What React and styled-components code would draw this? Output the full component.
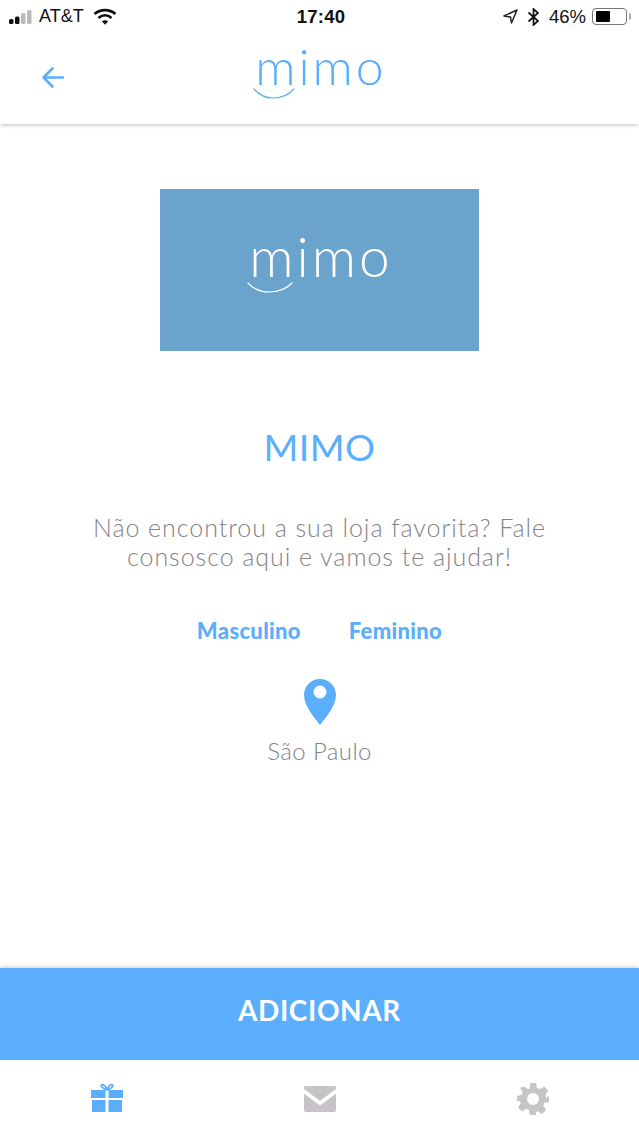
import React from 'react';
import styled, { createGlobalStyle } from 'styled-components';

const BLUE = '#5aaefc';
const GRAY = '#c6c4c6';

const GlobalStyle = createGlobalStyle`
  html, body {
    margin: 0;
    padding: 0;
    background: #fff;
  }
`;

const Page = styled.div`
  width: 639px;
  height: 1136px;
  display: flex;
  flex-direction: column;
  overflow: hidden;
  background: #fff;
  font-family: Lato, "Open Sans", sans-serif;
`;

const StatusBar = styled.div`
  height: 33px;
  padding: 0 5px 0 8px;
  display: grid;
  grid-template-columns: 1fr auto 1fr;
  align-items: center;
  font-family: "Liberation Sans", Arial, sans-serif;
  font-size: 18.500px;
  color: #111;
`;

const StatusLeft = styled.div`
  display: flex;
  align-items: center;
  gap: 5px;
`;

const StatusRight = styled.div`
  display: flex;
  align-items: center;
  justify-content: flex-end;
  gap: 6px;
`;

const Carrier = styled.span`
  font-size: 18px;
`;

const Clock = styled.span`
  font-weight: 700;
  font-size: 18.500px;
  letter-spacing: 0.2px;
`;

const Battery = styled.div`
  width: 35px;
  height: 17px;
  padding: 2px 3px;
  box-sizing: border-box;
  border: 1px solid #777;
  border-radius: 4px;
  margin-right: 7px;
  position: relative;

  &::before {
    content: '';
    display: block;
    width: 14px;
    height: 100%;
    background: #000;
    border-radius: 1px;
  }

  &::after {
    content: '';
    position: absolute;
    right: -5px;
    top: 4px;
    width: 2px;
    height: 7px;
    background: #aaa;
    border-radius: 0 2px 2px 0;
  }
`;

const Header = styled.header`
  height: 91px;
  box-sizing: border-box;
  padding-bottom: 26px;
  display: flex;
  align-items: center;
  justify-content: center;
  position: relative;
  z-index: 1;
  box-shadow: 0 3px 3px -1px rgba(0, 0, 0, 0.18);
  background: #fff;
`;

const BackButton = styled.button`
  position: absolute;
  left: 41px;
  top: 32px;
  width: 24px;
  height: 24px;
  padding: 0;
  display: flex;
  border: 0;
  background: none;
`;

const Logo = styled.div`
  position: relative;
  display: inline-block;
  margin-left: 3px;
  font-weight: 300;
  font-size: ${p => p.$size}px;
  line-height: 1;
  letter-spacing: 3px;
  color: ${p => p.$color};
`;

const Smile = styled.svg`
  position: absolute;
  left: -2px;
  top: ${p => p.$top}px;
`;

const Main = styled.main`
  flex: 1;
  display: flex;
  flex-direction: column;
  align-items: center;
  padding-top: 65px;
`;

const Banner = styled.div`
  width: 319px;
  height: 162px;
  box-sizing: border-box;
  padding-bottom: 28px;
  display: flex;
  align-items: center;
  justify-content: center;
  background: #6aa3cb;
`;

const Title = styled.h1`
  margin: 62px 0 0;
  font-size: 37.500px;
  line-height: 68px;
  font-weight: 400;
  letter-spacing: 0.5px;
  color: ${BLUE};
`;

const Description = styled.p`
  margin: 32px 0 0;
  width: 500px;
  text-align: center;
  font-size: 25px;
  line-height: 29px;
  font-weight: 300;
  letter-spacing: 0.95px;
  color: #858287;
`;

const Genders = styled.div`
  margin-top: 47px;
  display: flex;
  gap: 48px;
`;

const Gender = styled.span`
  font-size: 22px;
  line-height: 26px;
  font-weight: 900;
  letter-spacing: 0.3px;
  color: ${BLUE};
`;

const Pin = styled.svg`
  margin-top: 35px;
  display: block;
`;

const City = styled.span`
  margin-top: 12px;
  font-size: 24px;
  line-height: 28px;
  font-weight: 300;
  letter-spacing: 0.4px;
  color: #858287;
`;

const AddButton = styled.button`
  flex: none;
  height: 92px;
  border: 0;
  padding: 0 0 8px;
  background: ${BLUE};
  color: #fff;
  font-family: inherit;
  font-size: 28px;
  font-weight: 700;
  letter-spacing: 0.6px;
  box-shadow: 0 -1px 4px rgba(0, 0, 0, 0.2);
`;

const TabBar = styled.nav`
  flex: none;
  height: 76px;
  display: grid;
  grid-template-columns: repeat(3, 1fr);
  background: #fff;
`;

const Tab = styled.div`
  display: flex;
  justify-content: center;
  padding-top: ${p => p.$top}px;
`;

const Arrow = () => (
  <svg width="24" height="24" viewBox="0 0 24 24" fill="none" stroke={BLUE} strokeWidth="2.600" strokeLinecap="round" strokeLinejoin="round">
    <path d="M22 12.500H2.500M11.500 3.500L2.500 12.500L11.500 21.500" />
  </svg>
);

const GiftIcon = () => (
  <svg width="32" height="28" viewBox="0 0 32 28" fill={BLUE}>
    <path d="M0 6h14.500v8H0zM17.500 6H32v8H17.500zM1 16h13.500v12H1zM17.500 16H31v12H17.500z" />
    <path d="M16 6C13 5 9.500 3 10.500 1C12 0 15 2 16 6C17 2 20 0 21.500 1C22.500 3 19 5 16 6Z" fill="none" stroke={BLUE} strokeWidth="1.800" />
  </svg>
);

const MailIcon = () => (
  <svg width="32" height="26" viewBox="0 0 32 26" fill={GRAY}>
    <path d="M0 1.500C0 .6 .6 0 1.500 0H30.500C31.400 0 32 .6 32 1.500V3L16 15L0 3Z" />
    <path d="M0 7.500L16 19.500L32 7.500V24C32 25.200 31.200 26 30 26H2C.8 26 0 25.200 0 24Z" />
  </svg>
);

const GearIcon = () => (
  <svg width="32" height="32" viewBox="0 0 32 32" fill={GRAY}>
    <path
      fillRule="evenodd"
      d="M13 0h6l1 5 3 1.300 4.200-2.800 4 4-2.800 4.200L29.500 15 32 13v6l-4.500.8-1.200 3 2.700 4.200-4 4-4.200-2.700-1.800.7L19 32h-6l-1-5-2.800-1.200L5 28.500l-4-4 2.700-4.200L2.500 17.500 0 19v-6l4.500-1 1.200-3L3 4.800l4-1 4.200 2.500L13 5.500zM16 10a6 6 0 1 0 0 12a6 6 0 0 0 0-12z"
    />
  </svg>
);

const App = () => (
  <Page>
    <GlobalStyle />
    <StatusBar>
      <StatusLeft>
        <svg width="26" height="16" viewBox="0 0 26 16">
          <rect x="1" y="10" width="4.500" height="5" rx="1.500" fill="#111" />
          <rect x="7" y="7.500" width="4.500" height="7.500" rx="1.500" fill="#111" />
          <rect x="13" y="4" width="4.500" height="11" rx="1.500" fill="#bbb" />
          <rect x="19" y="1" width="4.500" height="14" rx="1.500" fill="#bbb" />
        </svg>
        <Carrier>AT&amp;T</Carrier>
        <svg width="24" height="18" viewBox="0 0 24 18" fill="none" stroke="#111" strokeWidth="2.600" style={{ marginLeft: 4 }}>
          <path d="M1.500 6C7.500 .8 16.500 .8 22.500 6" />
          <path d="M5.500 10C9.500 6.500 14.500 6.500 18.500 10" />
          <path d="M12 16.800L8.800 13.300C10.800 11.800 13.200 11.800 15.200 13.300Z" fill="#111" stroke="none" />
        </svg>
      </StatusLeft>
      <Clock>17:40</Clock>
      <StatusRight>
        <svg width="15" height="15" viewBox="0 0 15 15" fill="none" stroke="#222" strokeWidth="1.500" strokeLinejoin="round">
          <path d="M14 1L1 7L7.500 8L8.500 14Z" />
        </svg>
        <svg width="13" height="18" viewBox="0 0 13 18" fill="none" stroke="#111" strokeWidth="1.700" style={{ margin: '0 3px' }}>
          <path d="M1.500 4.500L11 13L6.500 17V1L11 5L1.500 13.500" />
        </svg>
        <span>46%</span>
        <Battery />
      </StatusRight>
    </StatusBar>

    <Header>
      <BackButton aria-label="Voltar">
        <Arrow />
      </BackButton>
      <Logo $size={50} $color={BLUE}>
        mimo
        <Smile $top={47} width="42" height="12" viewBox="0 0 42 12" fill="none" stroke={BLUE} strokeWidth="1.200" strokeLinecap="round">
          <path d="M1 1C11 13 30 13 41 1" />
        </Smile>
      </Logo>
    </Header>

    <Main>
      <Banner>
        <Logo $size={55} $color="#fff">
          mimo
          <Smile $top={53} width="46" height="12" viewBox="0 0 46 12" fill="none" stroke="#fff" strokeWidth="1.200" strokeLinecap="round">
            <path d="M1 1C12 13 33 13 45 1" />
          </Smile>
        </Logo>
      </Banner>
      <Title>MIMO</Title>
      <Description>
        Não encontrou a sua loja favorita? Fale
        <br />
        consosco aqui e vamos te ajudar!
      </Description>
      <Genders>
        <Gender>Masculino</Gender>
        <Gender>Feminino</Gender>
      </Genders>
      <Pin width="32" height="46" viewBox="0 0 32 46">
        <path
          fill={BLUE}
          fillRule="evenodd"
          d="M16 0C7 0 0 7 0 16C0 26 9 37 16 46C23 37 32 26 32 16C32 7 25 0 16 0ZM16 6.500a6.500 6.500 0 1 1 0 13a6.500 6.500 0 0 1 0-13Z"
        />
      </Pin>
      <City>São Paulo</City>
    </Main>

    <AddButton>ADICIONAR</AddButton>
    <TabBar>
      <Tab $top={24}><GiftIcon /></Tab>
      <Tab $top={26}><MailIcon /></Tab>
      <Tab $top={23}><GearIcon /></Tab>
    </TabBar>
  </Page>
);

export default App;
